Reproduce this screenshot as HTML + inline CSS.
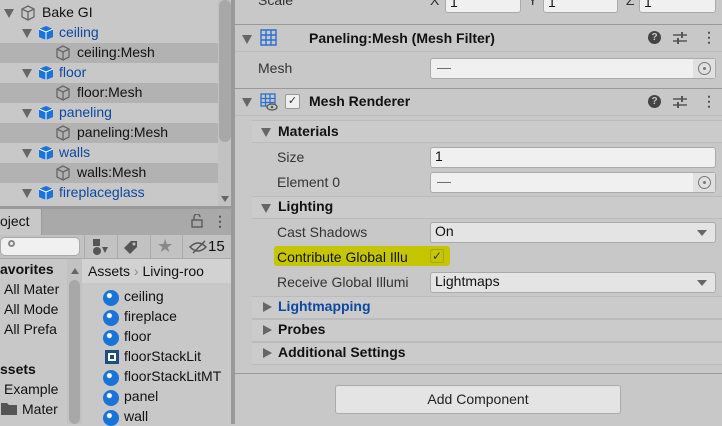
<!DOCTYPE html><html><head><style>
*{box-sizing:border-box;margin:0;padding:0}
body{width:722px;height:424px;overflow:hidden;background:#c8c8c8;font-family:"Liberation Sans",sans-serif;font-size:14px;color:#111;position:relative}
.a{position:absolute;white-space:nowrap}
.blue{color:#0d47a1}
.tri{position:absolute;width:0;height:0;border-left:5px solid transparent;border-right:5px solid transparent;border-top:9px solid #666}
.trr{position:absolute;width:0;height:0;border-top:5px solid transparent;border-bottom:5px solid transparent;border-left:9px solid #666}
.fld{position:absolute;background:#f0f0f0;border:1px solid #aaa;border-radius:3px}
.dd{position:absolute;background:#e4e4e4;border:1px solid #aaa;border-radius:3px}
.b{font-weight:bold}
.sec{position:absolute;left:252px;width:470px;background:#cbcbcb;border-top:1px solid #bbb;border-bottom:1px solid #bbb}
</style></head><body>
<div class="a" style="left:0;top:43px;width:218px;height:20px;background:#b2b2b2"></div>
<div class="a" style="left:0;top:83px;width:218px;height:20px;background:#b2b2b2"></div>
<div class="a" style="left:0;top:123px;width:218px;height:20px;background:#b2b2b2"></div>
<div class="a" style="left:0;top:163px;width:218px;height:20px;background:#b2b2b2"></div>
<div class="a" style="left:218px;top:0;width:14px;height:207px;background:#c2c2c2"></div>
<div class="a" style="left:219px;top:0;width:12px;height:142px;background:#a8a8a8;border-radius:6px"></div>
<div class="tri" style="left:221px;top:196px;border-top-width:6px;border-left-width:4px;border-right-width:4px"></div>
<div class="tri" style="left:4px;top:9px"></div>
<svg class="a" style="left:20px;top:5px" width="16" height="16" viewBox="0 0 16 16"><path d="M8 1L14 4V12L8 15L2 12V4Z M2 4L8 7L14 4 M8 7V15" fill="none" stroke="#666" stroke-width="1.3"/></svg>
<div class="a" style="left:42px;top:4px">Bake GI</div>
<div class="tri" style="left:22px;top:29px"></div><svg class="a" style="left:38px;top:25px" width="16" height="16" viewBox="0 0 16 16"><path d="M8 1L15 4V12L8 15L1 12V4Z" fill="#1a73d8"/><path d="M1 4L8 7L15 4M8 7V15" stroke="#fff" stroke-width="1" fill="none"/></svg><div class="a blue" style="left:59px;top:24px">ceiling</div>
<svg class="a" style="left:55px;top:45px" width="16" height="16" viewBox="0 0 16 16"><path d="M8 1L14 4V12L8 15L2 12V4Z M2 4L8 7L14 4 M8 7V15" fill="none" stroke="#666" stroke-width="1.3"/></svg><div class="a" style="left:77px;top:44px">ceiling:Mesh</div>
<div class="tri" style="left:22px;top:69px"></div><svg class="a" style="left:38px;top:65px" width="16" height="16" viewBox="0 0 16 16"><path d="M8 1L15 4V12L8 15L1 12V4Z" fill="#1a73d8"/><path d="M1 4L8 7L15 4M8 7V15" stroke="#fff" stroke-width="1" fill="none"/></svg><div class="a blue" style="left:59px;top:64px">floor</div>
<svg class="a" style="left:55px;top:85px" width="16" height="16" viewBox="0 0 16 16"><path d="M8 1L14 4V12L8 15L2 12V4Z M2 4L8 7L14 4 M8 7V15" fill="none" stroke="#666" stroke-width="1.3"/></svg><div class="a" style="left:77px;top:84px">floor:Mesh</div>
<div class="tri" style="left:22px;top:109px"></div><svg class="a" style="left:38px;top:105px" width="16" height="16" viewBox="0 0 16 16"><path d="M8 1L15 4V12L8 15L1 12V4Z" fill="#1a73d8"/><path d="M1 4L8 7L15 4M8 7V15" stroke="#fff" stroke-width="1" fill="none"/></svg><div class="a blue" style="left:59px;top:104px">paneling</div>
<svg class="a" style="left:55px;top:125px" width="16" height="16" viewBox="0 0 16 16"><path d="M8 1L14 4V12L8 15L2 12V4Z M2 4L8 7L14 4 M8 7V15" fill="none" stroke="#666" stroke-width="1.3"/></svg><div class="a" style="left:77px;top:124px">paneling:Mesh</div>
<div class="tri" style="left:22px;top:149px"></div><svg class="a" style="left:38px;top:145px" width="16" height="16" viewBox="0 0 16 16"><path d="M8 1L15 4V12L8 15L1 12V4Z" fill="#1a73d8"/><path d="M1 4L8 7L15 4M8 7V15" stroke="#fff" stroke-width="1" fill="none"/></svg><div class="a blue" style="left:59px;top:144px">walls</div>
<svg class="a" style="left:55px;top:165px" width="16" height="16" viewBox="0 0 16 16"><path d="M8 1L14 4V12L8 15L2 12V4Z M2 4L8 7L14 4 M8 7V15" fill="none" stroke="#666" stroke-width="1.3"/></svg><div class="a" style="left:77px;top:164px">walls:Mesh</div>
<div class="tri" style="left:22px;top:189px"></div><svg class="a" style="left:38px;top:185px" width="16" height="16" viewBox="0 0 16 16"><path d="M8 1L15 4V12L8 15L1 12V4Z" fill="#1a73d8"/><path d="M1 4L8 7L15 4M8 7V15" stroke="#fff" stroke-width="1" fill="none"/></svg><div class="a blue" style="left:59px;top:184px">fireplaceglass</div>
<div class="a" style="left:0;top:206px;width:232px;height:3px;background:#999"></div>
<div class="a" style="left:0;top:209px;width:232px;height:26px;background:#a9a9a9"></div>
<div class="a" style="left:0;top:209px;width:42px;height:27px;background:#c8c8c8;border-right:1px solid #999"></div>
<div class="a" style="left:0;top:213px">oject</div>
<svg class="a" style="left:190px;top:214px" width="14" height="14"><rect x="2" y="6" width="10" height="7" fill="none" stroke="#555" stroke-width="1.3"/><path d="M4 6V3a3 3 0 0 1 6 0" fill="none" stroke="#555" stroke-width="1.3"/></svg>
<div class="a" style="left:213px;top:213px;font-weight:bold;color:#555">⋮</div>
<div class="a" style="left:0;top:235px;width:232px;height:24px;background:#c2c2c2;border-bottom:1px solid #aaa"></div>
<div class="a" style="left:0;top:237px;width:80px;height:19px;background:#f0f0f0;border:1px solid #aaa;border-radius:5px"></div>
<div class="a" style="left:8px;top:240px;width:7px;height:7px;border:2px solid #888;border-radius:50%"></div>
<div class="a" style="left:84px;top:235px;width:1px;height:24px;background:#aaa"></div>
<div class="a" style="left:117px;top:235px;width:1px;height:24px;background:#aaa"></div>
<div class="a" style="left:150px;top:235px;width:1px;height:24px;background:#aaa"></div>
<div class="a" style="left:182px;top:235px;width:1px;height:24px;background:#aaa"></div>
<svg class="a" style="left:90px;top:238px" width="20" height="18"><rect x="3" y="1" width="7" height="7" fill="#555"/><circle cx="7" cy="13" r="4" fill="#555"/><path d="M12 9L18 9L15 15Z" fill="#555"/></svg>
<svg class="a" style="left:122px;top:239px" width="18" height="16"><path d="M2 9L9 2H15V8L8 15Z" fill="#555"/><circle cx="12" cy="5" r="1.5" fill="#c2c2c2"/></svg>
<div class="a" style="left:157px;top:236px;color:#888;font-size:18px">★</div>
<svg class="a" style="left:189px;top:240px" width="20" height="14"><path d="M1 7Q9 -1 17 7Q9 15 1 7Z" fill="none" stroke="#555" stroke-width="1.5"/><path d="M4 13L16 1" stroke="#555" stroke-width="1.5"/></svg>
<div class="a" style="left:208px;top:238px;font-size:15px">15</div>
<div class="a b" style="left:0;top:261px;font-size:14px">avorites</div>
<div class="a" style="left:4px;top:281px">All Mater</div>
<div class="a" style="left:4px;top:301px">All Mode</div>
<div class="a" style="left:4px;top:321px">All Prefa</div>
<div class="a b" style="left:0;top:361px">ssets</div>
<div class="a" style="left:4px;top:381px">Example</div>
<svg class="a" style="left:1px;top:402px" width="16" height="13"><path d="M0 1H6L8 3H16V13H0Z" fill="#555"/></svg>
<div class="a" style="left:22px;top:401px">Mater</div>
<div class="a" style="left:67px;top:259px;width:15px;height:165px;background:#c2c2c2"></div>
<div class="a" style="left:69px;top:280px;width:11px;height:144px;background:#a8a8a8;border-radius:6px"></div>
<div class="tri" style="left:71px;top:268px;border-top:0;border-bottom:6px solid #666;border-left-width:4px;border-right-width:4px"></div>
<div class="a" style="left:82px;top:259px;width:150px;height:24px;background:#d2d2d2"></div>
<div class="a" style="left:88px;top:263px">Assets <span style="color:#888">›</span> Living-roo</div>
<div class="a" style="left:103px;top:290px;width:16px;height:16px;border-radius:50%;background:radial-gradient(circle at 40% 35%,#fff 0 2px,#1a73d8 3px)"></div><div class="a" style="left:124px;top:288px">ceiling</div>
<div class="a" style="left:103px;top:310px;width:16px;height:16px;border-radius:50%;background:radial-gradient(circle at 40% 35%,#fff 0 2px,#1a73d8 3px)"></div><div class="a" style="left:124px;top:308px">fireplace</div>
<div class="a" style="left:103px;top:330px;width:16px;height:16px;border-radius:50%;background:radial-gradient(circle at 40% 35%,#fff 0 2px,#1a73d8 3px)"></div><div class="a" style="left:124px;top:328px">floor</div>
<div class="a" style="left:105px;top:350px;width:14px;height:14px;background:#1f4e7a;border:3px solid #1f4e7a;"><div style="width:8px;height:8px;border:2px solid #fff"></div></div><div class="a" style="left:124px;top:348px">floorStackLit</div>
<div class="a" style="left:103px;top:370px;width:16px;height:16px;border-radius:50%;background:radial-gradient(circle at 40% 35%,#fff 0 2px,#1a73d8 3px)"></div><div class="a" style="left:124px;top:368px">floorStackLitMT</div>
<div class="a" style="left:103px;top:390px;width:16px;height:16px;border-radius:50%;background:radial-gradient(circle at 40% 35%,#fff 0 2px,#1a73d8 3px)"></div><div class="a" style="left:124px;top:388px">panel</div>
<div class="a" style="left:103px;top:410px;width:16px;height:16px;border-radius:50%;background:radial-gradient(circle at 40% 35%,#fff 0 2px,#1a73d8 3px)"></div><div class="a" style="left:124px;top:408px">wall</div>
<div class="a" style="left:231px;top:0;width:4px;height:424px;background:#999"></div>
<div class="a" style="left:258px;top:-8px;color:#333">Scale</div>
<div class="a" style="left:430px;top:-8px;color:#333">X</div><div class="fld" style="left:445px;top:-6px;width:76px;height:19px;padding-left:4px;line-height:14px">1</div>
<div class="a" style="left:528px;top:-8px;color:#333">Y</div><div class="fld" style="left:543px;top:-6px;width:75px;height:19px;padding-left:4px;line-height:14px">1</div>
<div class="a" style="left:626px;top:-8px;color:#333">Z</div><div class="fld" style="left:639px;top:-6px;width:77px;height:19px;padding-left:4px;line-height:14px">1</div>
<div class="a" style="left:235px;top:24px;width:487px;height:1px;background:#999"></div>
<div class="tri" style="left:242px;top:35px"></div>
<svg class="a" style="left:260px;top:29px" width="17" height="17"><path d="M1 1H16V16H1Z M1 6H16 M1 11H16 M6 1V16 M11 1V16" fill="none" stroke="#2b6fcf" stroke-width="1.4"/></svg>
<div class="a b" style="left:309px;top:30px">Paneling:Mesh (Mesh Filter)</div>
<div class="a" style="left:648px;top:31px;width:13px;height:13px;border-radius:50%;background:#444;color:#c8c8c8;font-size:10px;font-weight:bold;text-align:center;line-height:13px">?</div>
<svg class="a" style="left:673px;top:31px" width="14" height="14"><path d="M0 4H14M0 10H14" stroke="#555" stroke-width="1.5"/><path d="M9 1V7M5 7V13" stroke="#555" stroke-width="2"/></svg>
<div class="a" style="left:702px;top:29px;font-weight:bold;color:#555">⋮</div>
<div class="a" style="left:235px;top:51px;width:487px;height:1px;background:#bbb"></div>
<div class="a" style="left:258px;top:60px;color:#333">Mesh</div>
<div class="fld" style="left:430px;top:58px;width:286px;height:21px"><div class="a" style="left:6px;top:0;color:#666">—</div><div class="a" style="right:0;top:0;width:22px;height:19px;background:#e0e0e0"></div><div class="a" style="right:4px;top:3px;width:13px;height:13px;border:1.5px solid #777;border-radius:50%"></div><div class="a" style="right:9px;top:8px;width:3px;height:3px;background:#777;border-radius:50%"></div></div>
<div class="a" style="left:235px;top:88px;width:487px;height:1px;background:#999"></div>
<div class="tri" style="left:242px;top:98px"></div>
<svg class="a" style="left:260px;top:93px" width="18" height="18"><path d="M1 1H15V13H1Z M1 5.5H15 M1 9.5H15 M5.5 1V13 M10 1V13" fill="none" stroke="#2b6fcf" stroke-width="1.3"/><ellipse cx="12" cy="14" rx="5" ry="3" fill="#c8c8c8" stroke="#555" stroke-width="1.3"/><circle cx="12" cy="14" r="1.3" fill="#555"/></svg>
<div class="a" style="left:285px;top:94px;width:15px;height:15px;background:#f0f0f0;border:1px solid #999;border-radius:2px;font-size:11px;text-align:center;line-height:13px;color:#333">✓</div>
<div class="a b" style="left:309px;top:93px">Mesh Renderer</div>
<div class="a" style="left:648px;top:95px;width:13px;height:13px;border-radius:50%;background:#444;color:#c8c8c8;font-size:10px;font-weight:bold;text-align:center;line-height:13px">?</div>
<svg class="a" style="left:673px;top:95px" width="14" height="14"><path d="M0 4H14M0 10H14" stroke="#555" stroke-width="1.5"/><path d="M9 1V7M5 7V13" stroke="#555" stroke-width="2"/></svg>
<div class="a" style="left:702px;top:93px;font-weight:bold;color:#555">⋮</div>
<div class="a" style="left:235px;top:115px;width:487px;height:1px;background:#bbb"></div>
<div class="sec" style="top:120px;height:23px"></div>
<div class="tri" style="left:261px;top:128px"></div>
<div class="a b" style="left:278px;top:123px">Materials</div>
<div class="a" style="left:277px;top:149px;color:#333">Size</div>
<div class="fld" style="left:430px;top:147px;width:286px;height:21px;padding-left:4px">1</div>
<div class="a" style="left:277px;top:174px;color:#333">Element 0</div>
<div class="fld" style="left:430px;top:172px;width:286px;height:21px"><div class="a" style="left:6px;top:0;color:#666">—</div><div class="a" style="right:0;top:0;width:22px;height:19px;background:#e0e0e0"></div><div class="a" style="right:4px;top:3px;width:13px;height:13px;border:1.5px solid #777;border-radius:50%"></div><div class="a" style="right:9px;top:8px;width:3px;height:3px;background:#777;border-radius:50%"></div></div>
<div class="sec" style="top:196px;height:23px"></div>
<div class="tri" style="left:261px;top:204px"></div>
<div class="a b" style="left:278px;top:198px">Lighting</div>
<div class="a" style="left:277px;top:224px;color:#333">Cast Shadows</div>
<div class="dd" style="left:430px;top:222px;width:286px;height:21px;padding-left:4px">On<div class="tri" style="right:8px;left:auto;top:7px;border-top-width:6px"></div></div>
<div class="a" style="left:274px;top:246px;width:176px;height:20px;background:#c6c600;border-radius:3px"></div>
<div class="a" style="left:277px;top:249px">Contribute Global Illu</div>
<div class="a" style="left:430px;top:249px;width:14px;height:14px;border:1px solid #a8a800;border-radius:2px;font-size:12px;text-align:center;line-height:12px;color:#333">✓</div>
<div class="a" style="left:277px;top:274px;color:#333">Receive Global Illumi</div>
<div class="dd" style="left:430px;top:272px;width:286px;height:21px;padding-left:4px">Lightmaps<div class="tri" style="right:8px;left:auto;top:7px;border-top-width:6px"></div></div>
<div class="sec" style="top:296px;height:23px"></div>
<div class="trr" style="left:263px;top:302px"></div>
<div class="a b blue" style="left:278px;top:298px">Lightmapping</div>
<div class="sec" style="top:319px;height:23px"></div>
<div class="trr" style="left:263px;top:325px"></div>
<div class="a b" style="left:278px;top:321px">Probes</div>
<div class="sec" style="top:342px;height:23px"></div>
<div class="trr" style="left:263px;top:348px"></div>
<div class="a b" style="left:278px;top:344px">Additional Settings</div>
<div class="a" style="left:235px;top:373px;width:487px;height:1px;background:#999"></div>
<div class="a" style="left:335px;top:385px;width:286px;height:29px;background:#e4e4e4;border:1px solid #aaa;border-radius:3px;text-align:center;line-height:27px;color:#222">Add Component</div>
</body></html>
